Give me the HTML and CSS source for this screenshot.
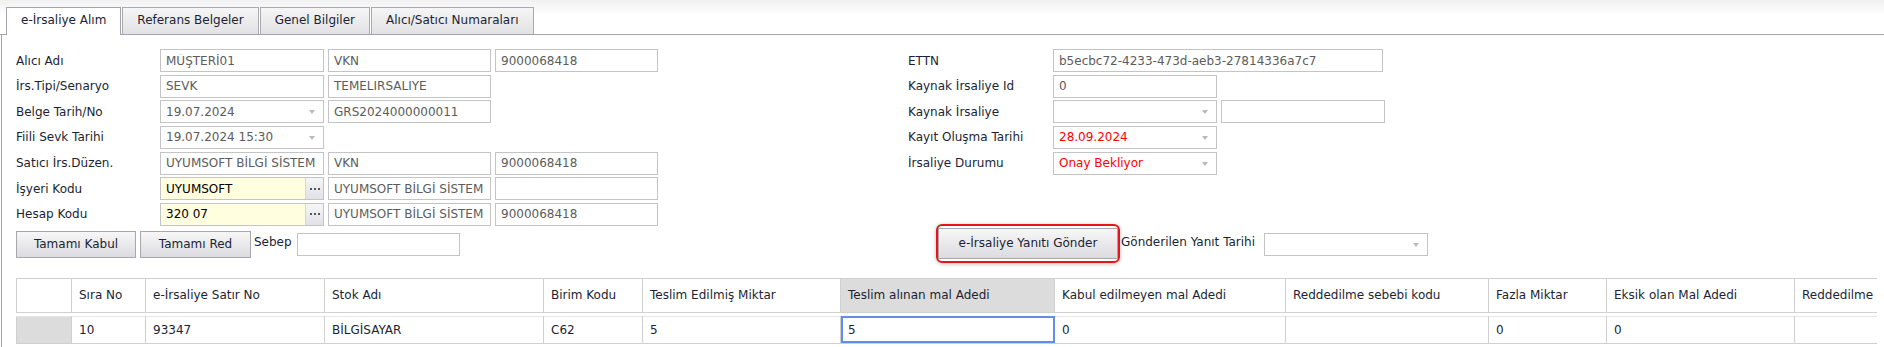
FILE: index.html
```html
<!DOCTYPE html>
<html lang="tr">
<head>
    <meta charset="UTF-8">
    <meta name="viewport" content="width=device-width, initial-scale=1.0">
    <title>e-İrsaliye Alım</title>
    <link rel="stylesheet" href="styles.css">
</head>
<body>
    <!-- Sekmeler -->
    <div class="tabstrip">
        <div class="tab active">e-İrsaliye Alım</div>
        <div class="tab">Referans Belgeler</div>
        <div class="tab">Genel Bilgiler</div>
        <div class="tab">Alıcı/Satıcı Numaraları</div>
    </div>

    <div class="panel">
        <div class="form">
            <div class="col col-left">
                <div class="field">
                    <label>Alıcı Adı</label>
                    <input class="w164" type="text" value="MÜŞTERİ01" readonly>
                    <input class="w163" type="text" value="VKN" readonly>
                    <input class="w163" type="text" value="9000068418" readonly>
                </div>
                <div class="field">
                    <label>İrs.Tipi/Senaryo</label>
                    <input class="w164" type="text" value="SEVK" readonly>
                    <input class="w163" type="text" value="TEMELIRSALIYE" readonly>
                </div>
                <div class="field">
                    <label>Belge Tarih/No</label>
                    <span class="combo w164"><input type="text" value="19.07.2024" readonly><i class="arrow"></i></span>
                    <input class="w163" type="text" value="GRS2024000000011" readonly>
                </div>
                <div class="field">
                    <label>Fiili Sevk Tarihi</label>
                    <span class="combo w164"><input type="text" value="19.07.2024 15:30" readonly><i class="arrow"></i></span>
                </div>
                <div class="field">
                    <label>Satıcı İrs.Düzen.</label>
                    <input class="w164" type="text" value="UYUMSOFT BİLGİ SİSTEM" readonly>
                    <input class="w163" type="text" value="VKN" readonly>
                    <input class="w163" type="text" value="9000068418" readonly>
                </div>
                <div class="field">
                    <label>İşyeri Kodu</label>
                    <span class="lookup w164">
                        <input type="text" value="UYUMSOFT">
                        <span class="dots"><svg width="10" height="2" viewBox="0 0 10 2"><rect x="0" y="0" width="2" height="2"/><rect x="4" y="0" width="2" height="2"/><rect x="8" y="0" width="2" height="2"/></svg></span>
                    </span>
                    <input class="w163" type="text" value="UYUMSOFT BİLGİ SİSTEM" readonly>
                    <input class="w163" type="text" value="" readonly>
                </div>
                <div class="field">
                    <label>Hesap Kodu</label>
                    <span class="lookup w164">
                        <input type="text" value="320 07">
                        <span class="dots"><svg width="10" height="2" viewBox="0 0 10 2"><rect x="0" y="0" width="2" height="2"/><rect x="4" y="0" width="2" height="2"/><rect x="8" y="0" width="2" height="2"/></svg></span>
                    </span>
                    <input class="w163" type="text" value="UYUMSOFT BİLGİ SİSTEM" readonly>
                    <input class="w163" type="text" value="9000068418" readonly>
                </div>
            </div>

            <div class="col col-right">
                <div class="field">
                    <label>ETTN</label>
                    <input class="w330" type="text" value="b5ecbc72-4233-473d-aeb3-27814336a7c7" readonly>
                </div>
                <div class="field">
                    <label>Kaynak İrsaliye Id</label>
                    <input class="w164" type="text" value="0" readonly>
                </div>
                <div class="field">
                    <label>Kaynak İrsaliye</label>
                    <span class="combo w164"><input type="text" value="" readonly><i class="arrow"></i></span>
                    <input class="w164" type="text" value="" readonly>
                </div>
                <div class="field">
                    <label>Kayıt Oluşma Tarihi</label>
                    <span class="combo w164"><input class="red" type="text" value="28.09.2024" readonly><i class="arrow"></i></span>
                </div>
                <div class="field">
                    <label>İrsaliye Durumu</label>
                    <span class="combo w164"><input class="red" type="text" value="Onay Bekliyor" readonly><i class="arrow"></i></span>
                </div>
            </div>
        </div>

        <!-- Butonlar -->
        <div class="actions">
            <div class="actions-left">
                <button class="btn btn-kabul">Tamamı Kabul</button>
                <button class="btn btn-red">Tamamı Red</button>
                <span class="sebep">Sebep</span>
                <input class="w163" type="text" value="">
            </div>
            <div class="actions-right">
                <span class="highlight"><button class="btn btn-gonder">e-İrsaliye Yanıtı Gönder</button></span>
                <span class="yanit">Gönderilen Yanıt Tarihi</span>
                <span class="combo w164"><input type="text" value="" readonly><i class="arrow"></i></span>
            </div>
        </div>

        <!-- Satırlar -->
        <div class="grid">
            <table class="grid-head">
                <colgroup>
                    <col style="width: 55px"><col style="width: 74px"><col style="width: 179px"><col style="width: 219px">
                    <col style="width: 99px"><col style="width: 198px"><col style="width: 214px"><col style="width: 231px">
                    <col style="width: 203px"><col style="width: 118px"><col style="width: 188px"><col style="width: 220px">
                </colgroup>
                <tr>
                    <th></th>
                    <th>Sıra No</th>
                    <th>e-İrsaliye Satır No</th>
                    <th>Stok Adı</th>
                    <th>Birim Kodu</th>
                    <th>Teslim Edilmiş Miktar</th>
                    <th class="sorted">Teslim alınan mal Adedi</th>
                    <th>Kabul edilmeyen mal Adedi</th>
                    <th>Reddedilme sebebi kodu</th>
                    <th>Fazla Miktar</th>
                    <th>Eksik olan Mal Adedi</th>
                    <th>Reddedilme sebebi</th>
                </tr>
            </table>
            <table class="grid-body">
                <colgroup>
                    <col style="width: 55px"><col style="width: 74px"><col style="width: 179px"><col style="width: 219px">
                    <col style="width: 99px"><col style="width: 198px"><col style="width: 214px"><col style="width: 231px">
                    <col style="width: 203px"><col style="width: 118px"><col style="width: 188px"><col style="width: 220px">
                </colgroup>
                <tr>
                    <td class="indicator"></td>
                    <td>10</td>
                    <td>93347</td>
                    <td>BİLGİSAYAR</td>
                    <td>C62</td>
                    <td>5</td>
                    <td class="focused">5</td>
                    <td>0</td>
                    <td></td>
                    <td>0</td>
                    <td>0</td>
                    <td></td>
                </tr>
            </table>
        </div>
    </div>
</body>
</html>
```

FILE: styles.css
```css
* {
    box-sizing: border-box;
}
body {
    margin: 0;
    font-family: Verdana, "DejaVu Sans", sans-serif;
    font-size: 12px;
    color: #201f35;
    background-color: #ffffff;
    overflow: hidden;
}

/* sekmeler */
.tabstrip {
    display: flex;
    align-items: flex-start;
    gap: 1px;
    height: 35px;
    padding: 7px 0 0 6px;
    border-bottom: 1px solid #a3a3ab;
    background: linear-gradient(#f1f1f1, #ffffff 16px);
}
.tab {
    height: 27px;
    padding: 0 14px;
    line-height: 25px;
    border: 1px solid #a9a9b0;
    border-bottom: none;
    background: linear-gradient(#f5f5f5, #e2e2e4);
    white-space: nowrap;
}
.tab.active {
    height: 28px;
    background: #ffffff;
    border-color: #a3a3ab;
}

.panel {
    margin-left: 1px;
    border-left: 1px solid #a3a3ab;
    padding: 14px 0 0 14px;
    height: 312px;
}

/* form */
.form {
    display: flex;
}
.col {
    display: grid;
    grid-auto-rows: 23px;
    row-gap: 2.67px;
}
.col-left {
    width: 892px;
}
.field {
    display: flex;
    align-items: center;
    gap: 4px;
}
.field label {
    width: 140px;
    white-space: nowrap;
}
.col-right .field label {
    width: 141px;
}
input {
    height: 23px;
    padding: 0 5px;
    border: 1px solid #c4c4c4;
    font-family: inherit;
    font-size: 12px;
    color: #5c5c5c;
    background-color: #ffffff;
    outline: none;
}
input.red {
    color: #ff0000;
}
.w164 { width: 164px; }
.w163 { width: 163px; }
.w330 { width: 330px; }

.combo {
    position: relative;
    display: inline-block;
    height: 23px;
}
.combo input {
    width: 100%;
}
.combo .arrow {
    position: absolute;
    right: 9px;
    top: 10px;
    border-left: 3.5px solid transparent;
    border-right: 3.5px solid transparent;
    border-top: 4px solid #b9b9b9;
}

.lookup {
    display: flex;
    height: 23px;
    border: 1px solid #c4c4c4;
}
.lookup input {
    flex: 1;
    min-width: 0;
    height: 21px;
    border: none;
    color: #000000;
    background-color: #ffffe0;
}
.lookup .dots {
    display: flex;
    align-items: center;
    justify-content: center;
    width: 18px;
    border-left: 1px solid #d6d6d6;
    background: linear-gradient(#f6f6f8, #e1e1e6);
}
.lookup .dots svg {
    fill: #55555f;
}

/* butonlar */
.actions {
    display: flex;
    align-items: center;
    height: 27px;
    margin-top: 5px;
}
.actions-left {
    display: flex;
    align-items: center;
    width: 892px;
}
.actions-right {
    display: flex;
    align-items: center;
    padding-left: 28px;
}
.btn {
    height: 27px;
    padding: 0;
    border: 1px solid #a7a7ad;
    background: linear-gradient(#f7f7f7, #dcdce0);
    font-family: inherit;
    font-size: 12px;
    color: #201f35;
    cursor: pointer;
}
.btn-kabul {
    width: 120px;
}
.btn-red {
    width: 111px;
    margin-left: 4px;
}
.sebep {
    margin: 0 5px 0 3px;
    position: relative;
    top: -2px;
}
.highlight {
    display: inline-block;
    padding: 2px 0;
    margin: -7px 0 -5px;
    border: 2px solid #e8141c;
    border-radius: 6px;
    box-shadow: 0 1px 4px rgba(0, 0, 0, 0.25);
}
.btn-gonder {
    display: block;
    width: 180px;
    height: 31px;
}
.yanit {
    margin: 0 9px 0 1px;
    position: relative;
    top: -2px;
}

/* tablo */
.grid {
    margin-top: 20px;
    margin-right: 7px;
    overflow: hidden;
}
.grid table {
    table-layout: fixed;
    border-collapse: collapse;
    width: 1998px;
}
.grid th,
.grid td {
    padding: 0 7px;
    text-align: left;
    font-weight: normal;
    white-space: nowrap;
    overflow: hidden;
    border: 1px solid #d0d0d0;
}
.grid-head th {
    height: 34px;
}
.grid-head th.sorted {
    background-color: #dcdcdc;
}
.grid-body {
    margin-top: 3px;
}
.grid-body td {
    height: 27px;
    border-top-color: #e6e6e6;
}
.grid-body td.indicator {
    background-color: #dcdcdc;
}
.grid-body td.focused {
    outline: 2px solid #5f8fe8;
    outline-offset: -2px;
}
```
